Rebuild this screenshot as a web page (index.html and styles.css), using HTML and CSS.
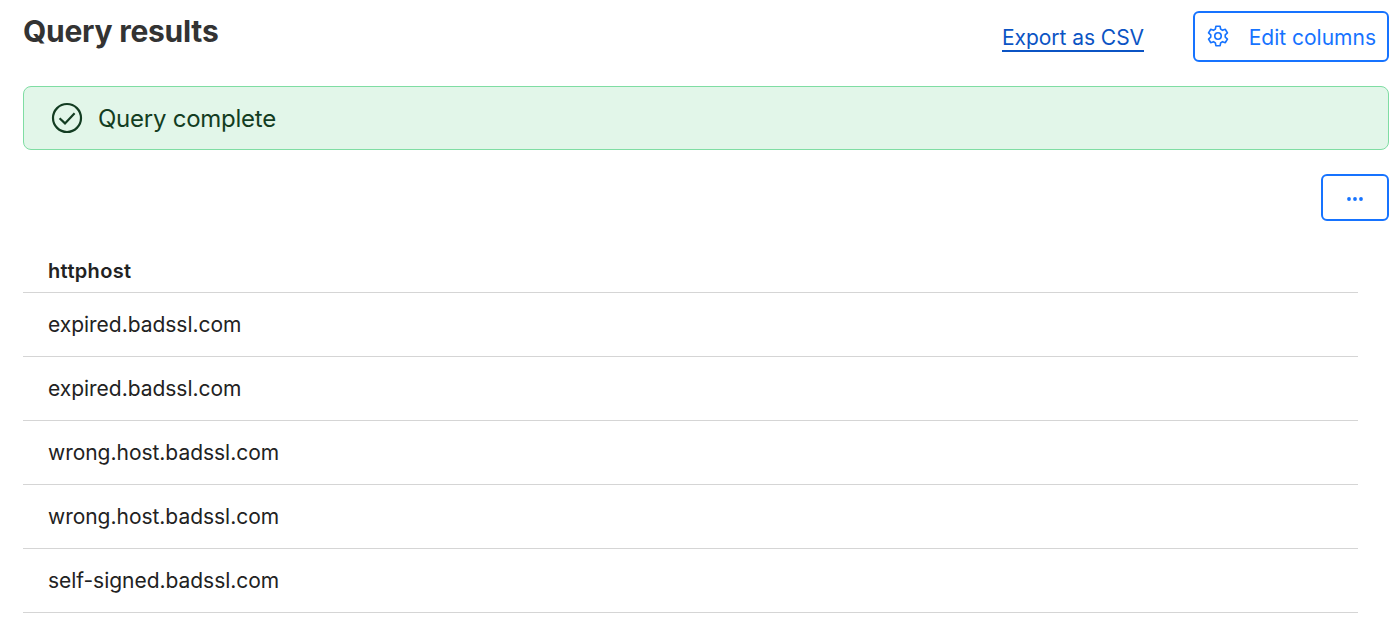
FILE: index.html
```html
<!DOCTYPE html>
<html lang="en">

	<head>
		<meta charset="UTF-8">
		<title>Query results</title>
		<link rel="stylesheet" href="styles.css">
	</head>

	<body>
		<div class="wrap">
			<div class="header">
				<h1 class="title">Query results</h1>
				<div class="actions">
					<a class="export" href="#">Export as CSV</a>
					<button class="btn edit" type="button">
						<svg class="gear" viewBox="-12 -12 24 24">
							<path d="M-2.3-10.6H2.3L2.9-7.5L4.9-6.2L8-7.3L10.3-3.3L7.9-1.2V1.2L10.3 3.3L8 7.3L4.9 6.2L2.9 7.5L2.3 10.6H-2.3L-2.9 7.5L-4.9 6.2L-8 7.3L-10.3 3.3L-7.9 1.2V-1.2L-10.3-3.3L-8-7.3L-4.9-6.2L-2.9-7.5Z" />
							<circle r="3.5" />
						</svg>
						<span class="label">Edit columns</span>
					</button>
				</div>
			</div>
			<div class="notice">
				<svg class="check" viewBox="0 0 32 32">
					<circle cx="16" cy="16" r="14" />
					<path d="M8.6 16.3L14 21.4L23.6 11.3" />
				</svg>
				<span>Query complete</span>
			</div>
			<div class="toolbar">
				<button class="btn more" type="button" aria-label="More">
					<svg class="dots" viewBox="0 0 16 4">
						<circle cx="2" cy="2" r="1.9" />
						<circle cx="8" cy="2" r="1.9" />
						<circle cx="14" cy="2" r="1.9" />
					</svg>
				</button>
			</div>
			<table class="results">
				<thead>
					<tr><th>httphost</th></tr>
				</thead>
				<tbody>
					<tr><td>expired.badssl.com</td></tr>
					<tr><td>expired.badssl.com</td></tr>
					<tr><td>wrong.host.badssl.com</td></tr>
					<tr><td>wrong.host.badssl.com</td></tr>
					<tr><td>self-signed.badssl.com</td></tr>
				</tbody>
			</table>
		</div>
	</body>

</html>
```
FILE: styles.css
```css
* {
	margin: 0;
	padding: 0;
	box-sizing: border-box;
}

body {
	background: #fff;
	color: #222;
	font-family: Inter, "Liberation Sans", sans-serif;
}

.wrap {
	padding: 11px 11px 0 23px;
}

.header {
	display: flex;
	justify-content: space-between;
	height: 75px;
}

.title {
	color: #333;
	font-size: 30px;
	font-weight: 700;
	line-height: 40px;
	letter-spacing: -0.25px;
}

.actions {
	display: flex;
	align-items: flex-start;
	gap: 49px;
}

.export {
	margin-top: 15px;
	border-bottom: 2px solid #0b54c4;
	color: #0b54c4;
	font-size: 21px;
	line-height: 24px;
	letter-spacing: -0.05px;
	text-decoration: none;
}

.btn {
	display: flex;
	align-items: center;
	border: 2px solid #1673ff;
	border-radius: 6px;
	background: #fff;
	color: #1673ff;
	font-family: inherit;
	font-size: 21px;
}

.edit {
	width: 196px;
	height: 51px;
	padding: 0 11px;
	justify-content: space-between;
	white-space: nowrap;
}

.label {
	padding-top: 2px;
}

.gear {
	width: 22px;
	height: 22px;
	margin-bottom: 2px;
	margin-left: 0.5px;
	fill: none;
	stroke: #1673ff;
	stroke-width: 1.8;
	stroke-linejoin: round;
}

.notice {
	display: flex;
	align-items: center;
	gap: 15px;
	height: 64px;
	padding-left: 27px;
	border: 1px solid #7fdda3;
	border-radius: 8px;
	background: #e2f6e9;
	color: #133d22;
	font-size: 24px;
	letter-spacing: -0.25px;
}

.check {
	width: 32px;
	height: 32px;
	fill: none;
	stroke: #133d22;
	stroke-width: 2.2;
}

.toolbar {
	display: flex;
	justify-content: flex-end;
	padding-top: 24px;
}

.more {
	justify-content: center;
	width: 68px;
	height: 47px;
}

.dots {
	width: 16px;
	height: 4px;
	margin-top: 2px;
	fill: #1673ff;
}

.results {
	width: 1335px;
	margin-top: 28px;
	border-collapse: separate;
	border-spacing: 0;
	font-size: 21px;
	letter-spacing: -0.03px;
}

.results th {
	height: 44px;
	padding-left: 25px;
	border-bottom: 1px solid #d5d5d5;
	font-size: 20px;
	font-weight: 600;
	letter-spacing: 0.35px;
	text-align: left;
}

.results td {
	height: 64px;
	padding-left: 25px;
	border-bottom: 1px solid #d5d5d5;
}
```
